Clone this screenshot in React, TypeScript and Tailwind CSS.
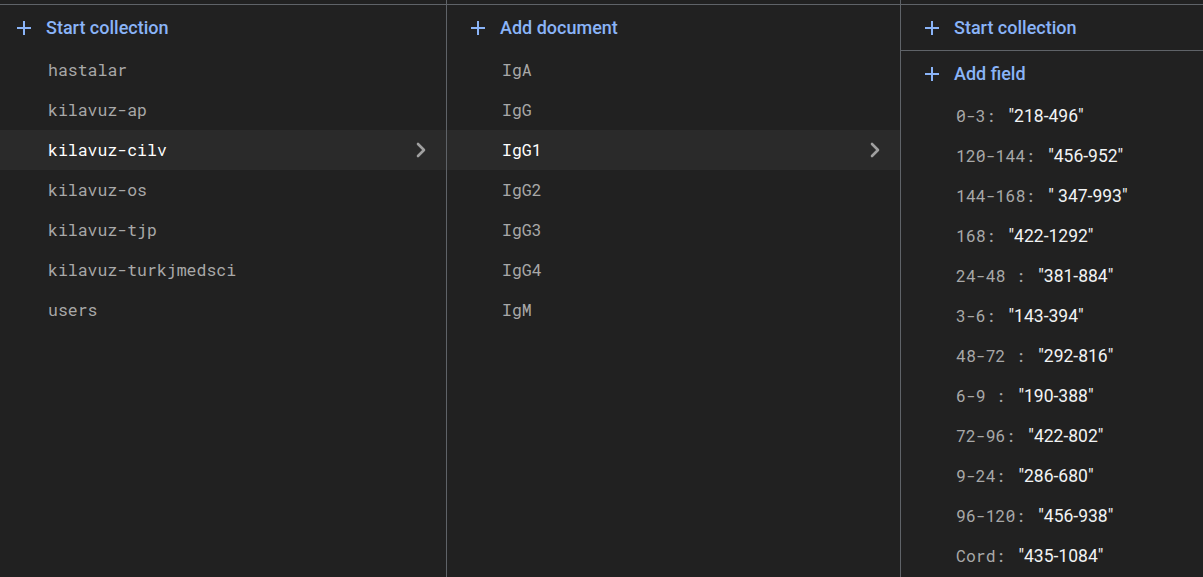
import { ChevronRight } from 'lucide-react';

const collections = [
    'hastalar',
    'kilavuz-ap',
    'kilavuz-cilv',
    'kilavuz-os',
    'kilavuz-tjp',
    'kilavuz-turkjmedsci',
    'users',
];

const documents = ['IgA', 'IgG', 'IgG1', 'IgG2', 'IgG3', 'IgG4', 'IgM'];

const fields = [
    { key: '0-3:', value: '"218-496"' },
    { key: '120-144:', value: '"456-952"' },
    { key: '144-168:', value: '" 347-993"' },
    { key: '168:', value: '"422-1292"' },
    { key: '24-48 :', value: '"381-884"' },
    { key: '3-6:', value: '"143-394"' },
    { key: '48-72 :', value: '"292-816"' },
    { key: '6-9 :', value: '"190-388"' },
    { key: '72-96:', value: '"422-802"' },
    { key: '9-24:', value: '"286-680"' },
    { key: '96-120:', value: '"456-938"' },
    { key: 'Cord:', value: '"435-1084"' },
];

const mono = "font-['Roboto_Mono','DejaVu_Sans_Mono','Liberation_Mono',monospace]";

const PlusIcon = () => (
    <svg width="14" height="14" viewBox="0 0 14 14" className="shrink-0">
        <path d="M7 0v14M0 7h14" stroke="#8ab4f8" strokeWidth="2" />
    </svg>
);

const ActionRow = ({ label, pad, h }: { label: string; pad: string; h: string }) => (
    <div className={`flex items-center ${pad} ${h} text-[#8ab4f8] text-lg font-medium`}>
        <PlusIcon />
        <span className="ml-[15px]">{label}</span>
    </div>
);

const ListRow = ({ label, active, pad }: { label: string; active: boolean; pad: string }) => (
    <div
        className={`flex items-center justify-between h-10 ${pad} pr-[13px] ${
            active ? 'bg-[#2a2a2a] text-white' : 'text-[#a8a8a8]'
        }`}
    >
        <span className={`${mono} text-[16.5px]`}>{label}</span>
        {active && <ChevronRight size={24} strokeWidth={2.6} color="#a0a0a0" />}
    </div>
);

export default function App() {
    return (
        <div className="w-[1203px] h-[577px] overflow-hidden bg-[#212121] flex font-['Roboto','Inter',sans-serif]">
            <div className="w-[447px] shrink-0 border-r border-[#5f6368] pt-1">
                <div className="border-t border-[#5f6368] h-full">
                    <ActionRow label="Start collection" pad="pl-[17px]" h="h-[45px]" />
                    {collections.map((c) => (
                        <ListRow key={c} label={c} active={c === 'kilavuz-cilv'} pad="pl-12" />
                    ))}
                </div>
            </div>
            <div className="w-[454px] shrink-0 border-r border-[#5f6368] pt-1">
                <div className="border-t border-[#5f6368] h-full">
                    <ActionRow label="Add document" pad="pl-6" h="h-[45px]" />
                    {documents.map((d) => (
                        <ListRow key={d} label={d} active={d === 'IgG1'} pad="pl-[55px]" />
                    ))}
                </div>
            </div>
            <div className="flex-1 pt-1">
                <div className="border-t border-[#5f6368] h-full">
                    <div className="border-b border-[#5f6368]">
                        <ActionRow label="Start collection" pad="pl-6" h="h-[45px]" />
                    </div>
                    <ActionRow label="Add field" pad="pl-6" h="h-[45px]" />
                    {fields.map((f) => (
                        <div key={f.key} className="flex items-center h-10 pl-[55px]">
                            <span className={`${mono} text-[16.5px] text-[#a8a8a8] whitespace-pre`}>
                                {f.key}{' '}
                            </span>
                            <span className="ml-[3px] text-[17.5px] text-[#f1f3f4] whitespace-pre">{f.value}</span>
                        </div>
                    ))}
                </div>
            </div>
        </div>
    );
}
